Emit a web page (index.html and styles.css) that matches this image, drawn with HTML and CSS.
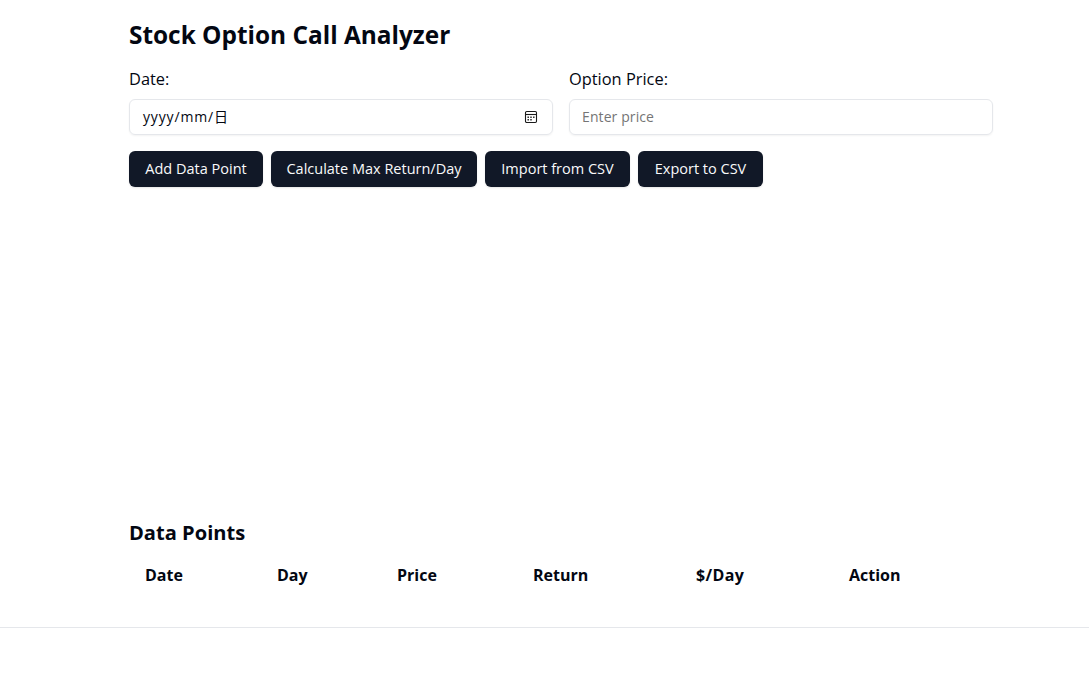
FILE: index.html
```html
<!DOCTYPE html>
<html lang="en">
<head>
<meta charset="utf-8">
<title>Stock Option Call Analyzer</title>
<link rel="stylesheet" href="styles.css">
</head>
<body>
<main class="container">
  <h1>Stock Option Call Analyzer</h1>
  <div class="fields">
    <div class="field">
      <div class="label">Date:</div>
      <div class="input"><span class="date-value">yyyy/mm/<span class="day">日</span></span>
        <svg class="calendar" width="14" height="14" viewBox="0 0 14 14" fill="none" stroke="#1a1a1a" stroke-width="1.1">
          <rect x="1.5" y="1.5" width="11" height="11" rx="1.2"/>
          <path d="M1.5 4.5h11"/>
          <path stroke-width="1.4" d="M3.5 7.2h1.4M6.3 7.2h1.4M9.1 7.2h1.4M3.5 9.8h1.4M6.3 9.8h1.4"/>
        </svg>
      </div>
    </div>
    <div class="field">
      <div class="label">Option Price:</div>
      <div class="input placeholder">Enter price</div>
    </div>
  </div>
  <div class="actions">
    <button class="add">Add Data Point</button>
    <button class="calc">Calculate Max Return/Day</button>
    <button class="import">Import from CSV</button>
    <button class="export">Export to CSV</button>
  </div>
  <div class="chart"></div>
  <h2>Data Points</h2>
  <table>
    <thead><tr><th class="c1">Date</th><th class="c2">Day</th><th class="c3">Price</th><th class="c4">Return</th><th class="c5">$/Day</th><th class="c6">Action</th></tr></thead>
  </table>
</main>
<footer></footer>
</body>
</html>
```
FILE: styles.css
```css
* { box-sizing: border-box; }
body { margin: 0; height: 677px; overflow: hidden; background: #fff; color: #030712; font-family: "Open Sans", "Noto Sans", "Noto Sans CJK SC", sans-serif; }
.container { width: 864px; margin-left: 129px; padding-top: 16px; }
h1 { margin: 0 0 16px; height: 36px; font-size: 24.4px; line-height: 37px; font-weight: 700; white-space: nowrap; }
.fields { display: grid; grid-template-columns: 1fr 1fr; gap: 16px; margin-bottom: 16px; }
.label { height: 32px; margin-top: -1px; font-size: 16.4px; line-height: 24px; }
.input { height: 36px; border: 1px solid #e5e7eb; border-radius: 6px; padding: 0 12px 1px; display: flex; align-items: center; justify-content: space-between; font-size: 14px; line-height: 20px; box-shadow: 0 1px 2px rgba(0, 0, 0, 0.05); }
.date-value { padding-left: 1px; letter-spacing: 0.85px; }
.day { font-family: "Noto Sans CJK SC", sans-serif; font-size: 14px; line-height: 1; }
.calendar { margin-right: 2px; }
.placeholder { color: #757575; letter-spacing: 0.1px; }
.actions { display: flex; gap: 8px; }
button { height: 36px; border: 0; border-radius: 6px; padding: 0; background: #111827; color: #f9fafb; font: 400 14.5px/20px "Open Sans", "Noto Sans", sans-serif; white-space: nowrap; box-shadow: 0 1px 2px rgba(0, 0, 0, 0.1); }
.add { width: 134px; }
.calc { width: 206px; }
.import { width: 145px; }
.export { width: 125px; }
.chart { height: 328px; }
h2 { margin: 0; height: 43px; font-size: 20.1px; line-height: 35px; font-weight: 700; }
table { width: 864px; border-collapse: collapse; table-layout: fixed; }
th { height: 33px; padding: 0 0 0 16px; text-align: left; font-size: 16px; line-height: 24px; font-weight: 700; }
.c1 { width: 132px; }
.c2 { width: 120px; }
.c3 { width: 136px; }
.c4 { width: 163px; }
.c5 { width: 153px; }
.c5 { letter-spacing: 0.4px; }
footer { margin-top: 36px; border-top: 1px solid #e5e7eb; }
```
